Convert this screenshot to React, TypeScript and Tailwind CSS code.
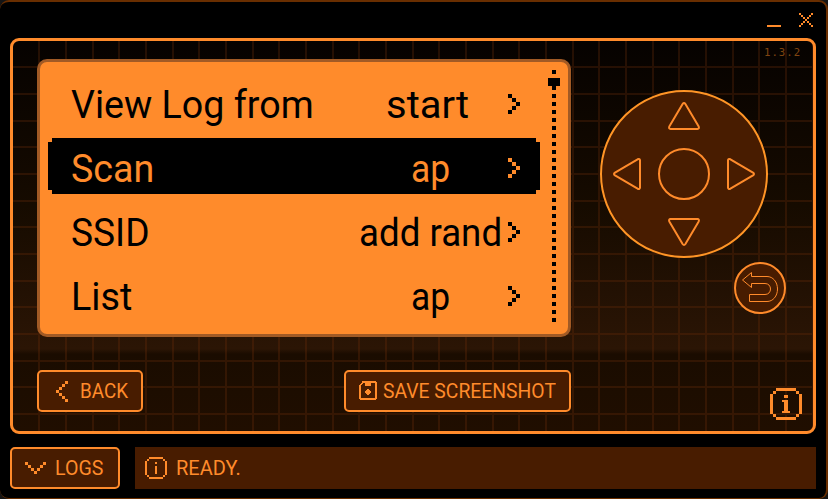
import React, { useLayoutEffect, useRef, useState } from "react";

/** Single line of text stretched horizontally to a fixed width. */
function Fit({ w, className = "", children }: { w: number; className?: string; children: string }) {
  const ref = useRef<HTMLSpanElement>(null);
  const [s, setS] = useState(1);
  useLayoutEffect(() => {
    if (ref.current) setS(w / ref.current.offsetWidth);
  }, [w]);
  return (
    <span className="block shrink-0" style={{ width: w }}>
      <span ref={ref} className={"inline-block origin-left whitespace-pre " + className} style={{ transform: `scaleX(${s})` }}>
        {children}
      </span>
    </span>
  );
}

/** Pixel icon: every run is [x, y, width, height] in cells. */
function Pixels({ runs, cols, rows, cell }: { runs: number[][]; cols: number; rows: number; cell: number }) {
  return (
    <svg className="block shrink-0" width={cols * cell} height={rows * cell} viewBox={`0 0 ${cols} ${rows}`} fill="currentColor" shapeRendering="crispEdges">
      {runs.map(([x, y, w, h], i) => (
        <rect key={i} x={x} y={y} width={w} height={h} />
      ))}
    </svg>
  );
}

const chevron = [[0, 0, 1, 1], [1, 1, 1, 1], [2, 2, 1, 1], [1, 3, 1, 1], [0, 4, 1, 1]];
const closeRuns = [0, 1, 2, 3, 4, 5, 6].flatMap((i) => [[i, i, 1, 1], [6 - i, i, 1, 1]]);

const rows = [
  { name: "View Log from", nw: 243, value: "start", vx: "ml-[72px]", vw: 83, gap: "ml-[39px]" },
  { name: "Scan", nw: 83, value: "ap", vx: "ml-[257px]", vw: 39, gap: "ml-[58px]" },
  { name: "SSID", nw: 79, value: "add rand", vx: "ml-[209px]", vw: 143, gap: "ml-[6px]" },
  { name: "List", nw: 61, value: "ap", vx: "ml-[279px]", vw: 39, gap: "ml-[58px]" },
];

function Row({ i }: { i: number }) {
  const r = rows[i];
  const on = i === 1;
  return (
    <div className={"relative flex h-14 w-[492px] items-start " + (on ? "bg-black text-[#ff8b2b]" : "text-black")}>
      {on && (
        <>
          <i className="absolute left-0 top-0 h-1 w-1 bg-[#ff8b2b]" />
          <i className="absolute right-0 top-0 h-1 w-1 bg-[#ff8b2b]" />
          <i className="absolute bottom-0 left-0 h-1 w-1 bg-[#ff8b2b]" />
          <i className="absolute bottom-0 right-0 h-1 w-1 bg-[#ff8b2b]" />
        </>
      )}
      <div className="flex pl-[23px] pt-2 text-[39px] leading-[46px]">
        <Fit w={r.nw}>{r.name}</Fit>
        <div className={r.vx}>
          <Fit w={r.vw}>{r.value}</Fit>
        </div>
      </div>
      <div className={"pt-5 " + r.gap}>
        <Pixels runs={chevron} cols={3} rows={5} cell={4} />
      </div>
    </div>
  );
}

function Grid() {
  const xs = Array.from({ length: 30 }, (_, n) => Math.ceil((n * 80) / 3 - 0.01) + 25);
  const ys = Array.from({ length: 14 }, (_, n) => Math.ceil((n * 80) / 3 - 0.01) + 25);
  return (
    <svg className="absolute inset-0" width="800" height="390" fill="#6e2d0a" fillOpacity="0.3" shapeRendering="crispEdges">
      <path d={xs.map((x) => `M${x} 0h2v390h-2z`).join("") + ys.map((y) => `M0 ${y}h800v2H0z`).join("")} />
    </svg>
  );
}

const button = "flex h-[42px] items-center rounded-[5px] border-2 border-[#ff8b2b] bg-[#481c00]";

export default function App() {
  return (
    <div className="h-[499px] w-[828px] overflow-hidden bg-[#151515] font-['Roboto','Liberation_Sans',sans-serif] text-[#ff8b2b]">
      <div className="flex h-[499px] w-[828px] flex-col rounded-[9px] border-b border-r-2 border-t-2 border-[#692e00] bg-black pl-[10px]">
        <header className="flex h-9 shrink-0 justify-end pr-[13px] pt-[11px]">
          <div className="mr-[18px] mt-3 h-0.5 w-3.5 bg-[#ff8b2b]" />
          <Pixels runs={closeRuns} cols={7} rows={7} cell={2} />
        </header>

        <main className="relative flex h-[396px] w-[806px] shrink-0 overflow-hidden rounded-[9px] border-[3px] border-[#ff8b2b] bg-[linear-gradient(180deg,#060200_0px,#160b00_165px,#2b1505_308px,#1a0c00_313px,#200e00_390px)]">
          <Grid />
          <section className="relative ml-6 mt-[18px] w-[534px]">
            <div className="flex h-[278px] rounded-[10px] border-[3px] border-[#a15a25] bg-[#ff8b2b] pl-2 pt-3">
              <div className="flex -mt-0 flex-col gap-2">
                {rows.map((_, i) => (
                  <Row key={i} i={i} />
                ))}
              </div>
              <div className="relative -mt-1 ml-3 h-[252px] w-1 bg-[repeating-linear-gradient(180deg,#000_0px,#000_4px,transparent_4px,transparent_8px)]">
                <i className="absolute -left-1 top-2 h-2 w-3 bg-black" />
              </div>
            </div>
            <div className="mt-[33px] flex justify-between">
              <button className={button + " w-[106px] pl-[17px]"}>
                <svg width="12" height="21" viewBox="0 0 12 21" fill="currentColor" shapeRendering="crispEdges">
                  <path d="M9 0h3v3H9zM6 3h3v3H6zM3 6h3v3H3zM0 9h3v3H0zM3 12h3v3H3zM6 15h3v3H6zM9 18h3v3H9z" />
                </svg>
                <div className="ml-[12px] text-[20px] leading-6">
                  <Fit w={48}>BACK</Fit>
                </div>
              </button>
              <button className={button + " w-[227px] pl-[13px]"}>
                <svg className="-mt-px" width="18" height="19" viewBox="0 0 18 19" fill="currentColor" shapeRendering="crispEdges">
                  <path fillRule="evenodd" d="M3 0H17V1H18V18H17V19H1V18H0V4H1V3H2V2H3ZM4 2V3H3V4H2V17H16V2Z" />
                  <path d="M6 0h6v5H6zM8 8h2v1h1v1h1v2h-1v1h-1v1H8v-1H7v-1H6v-2h1V9h1z" />
                </svg>
                <div className="ml-[6px] text-[20px] leading-6">
                  <Fit w={173}>SAVE SCREENSHOT</Fit>
                </div>
              </button>
            </div>
          </section>

          <section className="relative flex flex-1 flex-col">
            <div className="ml-auto mr-[12px] mt-[6px] font-['DejaVu_Sans_Mono',monospace] text-[11px] leading-3 text-[#804510]">
              <Fit w={37} className="tracking-[1px]">1.3.2</Fit>
            </div>
            <svg className="ml-[29px] mt-[31px] shrink-0" width="168" height="168" viewBox="0 0 168 168" fill="#481c00" stroke="#ff8b2b" strokeWidth="2" strokeLinejoin="round">
              <circle cx="84" cy="84" r="83" stroke="#ff9526" />
              <circle cx="84" cy="84" r="25" />
              <path d="M82.6 14Q84 12 85.4 14L98.7 36.6Q99.5 39 97.5 39H70.5Q68.5 39 69.3 36.6Z" />
              <path d="M82.6 154Q84 156 85.4 154L98.7 131.4Q99.5 129 97.5 129H70.5Q68.5 129 69.3 131.4Z" />
              <path d="M15 82.6Q13 84 15 85.4L37.6 98.7Q40 99.5 40 97.5V70.5Q40 68.5 37.6 69.3Z" />
              <path d="M153 82.6Q155 84 153 85.4L130.4 98.7Q128 99.5 128 97.5V70.5Q128 68.5 130.4 69.3Z" />
            </svg>
            <svg className="ml-[163px] mt-1 shrink-0" width="52" height="52" viewBox="0 0 52 52" fill="#481c00" stroke="#ff8b2b">
              <circle cx="26" cy="26" r="25" strokeWidth="2" />
              <path d="M8.5 18L17.5 10.5V14.500H33C39 14.500 43.500 20 43.500 27C43.500 34 39 39.500 33 39.500H15.500V32.500H31C34.500 32.500 36.500 30 36.500 27C36.500 24 34.500 21.500 31 21.500H17.500V25.500Z" />
            </svg>
            <svg className="ml-[199px] mt-[74px] shrink-0" width="32" height="32" viewBox="0 0 32 32" fill="currentColor" shapeRendering="crispEdges">
              <path d="M6 0h20v3H6zM6 29h20v3H6zM0 6h3v20H0zM29 6h3v20h-3zM3 3h3v3H3zM26 3h3v3h-3zM3 26h3v3H3zM26 26h3v3h-3z" />
              <path d="M14 7h4v3h-4zM12 12h6v2h-6zM14 12h4v13h-4zM12 23h8v2h-8z" />
            </svg>
          </section>
        </main>

        <footer className="mt-[13px] flex gap-[15px]">
          <button className={button + " w-[110px] pl-[13px]"}>
            <svg width="21" height="12" viewBox="0 0 21 12" fill="currentColor" shapeRendering="crispEdges">
              <path d="M0 0h3v3H0zM3 3h3v3H3zM6 6h3v3H6zM9 9h3v3H9zM12 6h3v3h-3zM15 3h3v3h-3zM18 0h3v3h-3z" />
            </svg>
            <div className="ml-[9px] text-[20px] leading-6">
              <Fit w={48}>LOGS</Fit>
            </div>
          </button>
          <div className="flex h-[42px] w-[681px] items-center bg-[#481c00] pl-[10px]">
            <svg width="22" height="22" viewBox="0 0 22 22" fill="currentColor" shapeRendering="crispEdges">
              <path d="M4 0h14v2H4zM4 20h14v2H4zM0 4h2v14H0zM20 4h2v14h-2zM2 2h2v2H2zM18 2h2v2h-2zM2 18h2v2H2zM18 18h2v2h-2zM10 5h2v2h-2zM10 9h2v8h-2z" />
            </svg>
            <div className="ml-[9px] text-[20px] leading-6">
              <Fit w={65}>READY.</Fit>
            </div>
          </div>
        </footer>
      </div>
    </div>
  );
}
